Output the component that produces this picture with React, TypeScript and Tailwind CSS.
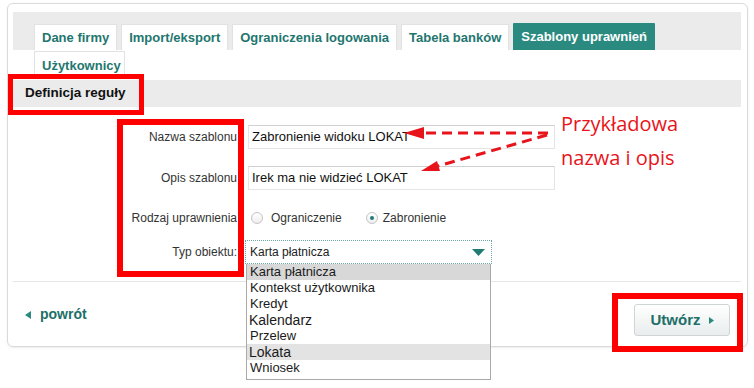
import React from 'react';

// ─── Zakładki ────────────────────────────────────────────────────────────────

const tabs = ['Dane firmy', 'Import/eksport', 'Ograniczenia logowania', 'Tabela banków'];

function Tab({ label, active = false }: { label: string; active?: boolean }) {
  if (active) {
    return (
      <div className="h-[27px] px-[8px] flex items-center bg-[#2a8a80] text-white text-[13px] font-bold rounded-t-[1px]">
        {label}
      </div>
    );
  }
  return (
    <div className="h-[26px] px-[7px] flex items-center bg-white border border-b-0 border-[#e2e2e2] text-[#23766f] text-[13px] font-bold">
      {label}
    </div>
  );
}

// ─── Radio ───────────────────────────────────────────────────────────────────

function Radio({ label, checked = false, gap }: { label: string; checked?: boolean; gap: string }) {
  return (
    <div className={`flex items-center ${gap}`}>
      <span className="w-[12px] h-[12px] rounded-full border border-[#c4c4c4] bg-gradient-to-b from-white to-[#eeeeee] flex items-center justify-center">
        {checked && <span className="w-[4px] h-[4px] rounded-full bg-[#1f7b73]" />}
      </span>
      <span className="text-[12px] text-[#333]">{label}</span>
    </div>
  );
}

const options = [
  { label: 'Karta płatnicza', sel: true },
  { label: 'Kontekst użytkownika' },
  { label: 'Kredyt' },
  { label: 'Kalendarz', big: true },
  { label: 'Przelew' },
  { label: 'Lokata', big: true, hover: true },
  { label: 'Wniosek' },
];

export default function App() {
  return (
    <div className="relative w-[754px] h-[388px] bg-white overflow-hidden font-['Liberation_Sans',Arial,sans-serif]">
      {/* Karta */}
      <div className="ml-[7px] mt-[3px] w-[741px] h-[344px] border border-[#dadada] rounded-[6px] shadow-[0_1px_2px_rgba(0,0,0,0.08)] pl-[5px] pr-[6px] pt-[8px]">
        {/* Pasek zakładek */}
        <div className="h-[38px] bg-[#ebebeb] pl-[21px] flex items-end gap-[4px]">
          {tabs.map((t) => (
            <Tab key={t} label={t} />
          ))}
          <Tab label="Szablony uprawnień" active />
        </div>
        <div className="h-[30px] pl-[21px] pt-[1px]">
          <div className="h-[28px] w-[91px] px-[7px] flex items-center bg-white border border-[#e2e2e2] border-b-0 text-[#23766f] text-[13px] font-bold">
            Użytkownicy
          </div>
        </div>

        {/* Nagłówek sekcji */}
        <div className="h-[27px] bg-[#ebebeb] pl-[12px] flex items-center text-[13.5px] font-bold text-[#111]">
          Definicja reguły
        </div>

        {/* Formularz */}
        <div className="h-[175px] border-b border-[#e6e6e6] pt-[18px] flex flex-col">
          <div className="flex items-center h-[24px]">
            <div className="w-[224px] text-right text-[12px] text-[#333]">Nazwa szablonu</div>
            <div className="ml-[11px] w-[307px] h-[24px] border border-[#e4e4e4] border-t-[#d0d0d0] flex items-center pl-[3px] text-[13px] text-[#111]">
              Zabronienie widoku LOKAT
            </div>
          </div>
          <div className="flex items-center h-[24px] mt-[17px]">
            <div className="w-[224px] text-right text-[12px] text-[#333]">Opis szablonu</div>
            <div className="ml-[11px] w-[307px] h-[24px] border border-[#e4e4e4] border-t-[#d0d0d0] flex items-center pl-[3px] text-[13px] text-[#111]">
              Irek ma nie widzieć LOKAT
            </div>
          </div>
          <div className="flex items-center h-[20px] mt-[18px]">
            <div className="w-[224px] text-right text-[12px] text-[#333]">Rodzaj uprawnienia</div>
            <div className="ml-[14px] flex items-center gap-[24px]">
              <Radio label="Ograniczenie" gap="gap-[8px]" />
              <Radio label="Zabronienie" gap="gap-[5px]" checked />
            </div>
          </div>
          <div className="flex items-center h-[24px] mt-[12px]">
            <div className="w-[224px] text-right text-[12px] text-[#333]">Typ obiektu:</div>
            <div className="relative ml-[8px] w-[247px] h-[24px]">
              <div className="h-full border border-dotted border-[#6aa9a3] flex items-center justify-between pl-[4px] pr-[6px] text-[12px] text-[#222]">
                <span>Karta płatnicza</span>
                <svg width="13" height="7" viewBox="0 0 13 7">
                  <polygon points="0,0 13,0 6.5,7" fill="#1f7b73" />
                </svg>
              </div>
              {/* Rozwinięta lista */}
              <div className="absolute left-[1px] top-[24px] w-[245px] z-10 bg-white border border-[#a9a9a9] border-t-0 pb-[3px]">
                {options.map((o) => (
                  <div
                    key={o.label}
                    className={`h-[16px] flex items-center text-[#1a1a1a] ${o.big ? 'pl-[2px] text-[14px]' : 'pl-[3px] text-[13px]'} ${o.sel ? 'bg-[#d8d8d8]' : ''} ${o.hover ? 'bg-[#e3e3e3]' : ''}`}
                  >
                    {o.label}
                  </div>
                ))}
              </div>
            </div>
          </div>
        </div>

        {/* Stopka */}
        <div className="h-[63px] flex items-start justify-between">
          <div className="mt-[22px] ml-[12px] flex items-center gap-[9px] text-[#1d6f69] text-[14px] font-bold">
            <svg width="6" height="8" viewBox="0 0 6 8">
              <polygon points="6,0 6,8 0,4" fill="#2a8a80" />
            </svg>
            <span>powrót</span>
          </div>
          <div className="mt-[22px] mr-[11px] w-[96px] h-[32px] rounded-[3px] border border-[#cfd4d4] bg-gradient-to-b from-white to-[#e9eded] flex items-center justify-center gap-[8px] text-[#1d6f69] text-[15px] font-bold">
            <span>Utwórz</span>
            <svg width="5" height="7" viewBox="0 0 5 7">
              <polygon points="0,0 5,3.5 0,7" fill="#2a8a80" />
            </svg>
          </div>
        </div>
      </div>

      {/* Adnotacje */}
      <div className="absolute left-[8px] top-[74px] w-[136px] h-[41px] border-[5px] border-[#ff0000]" />
      <div className="absolute left-[117px] top-[119px] w-[127px] h-[158px] border-[6px] border-[#ff0000]" />
      <div className="absolute left-[612px] top-[293px] w-[131px] h-[59px] border-[6px] border-[#ff0000]" />

      <div className="absolute left-[561px] top-[107px] text-[20px] leading-[34px] text-[#e8141b] font-['Open_Sans',sans-serif]">
        <div>Przykładowa</div>
        <div>nazwa i opis</div>
      </div>

      <svg className="absolute left-0 top-0 pointer-events-none" width="754" height="388" viewBox="0 0 754 388">
        <line x1="548" y1="133" x2="423" y2="133" stroke="#e8141b" strokeWidth="3" strokeDasharray="10 6" />
        <polygon points="404,133 424,127 424,139" fill="#e8141b" />
        <line x1="547" y1="135" x2="438" y2="166" stroke="#e8141b" strokeWidth="3" strokeDasharray="10 6" />
        <polygon points="421,171 440,171 437,161" fill="#e8141b" />
      </svg>
    </div>
  );
}
